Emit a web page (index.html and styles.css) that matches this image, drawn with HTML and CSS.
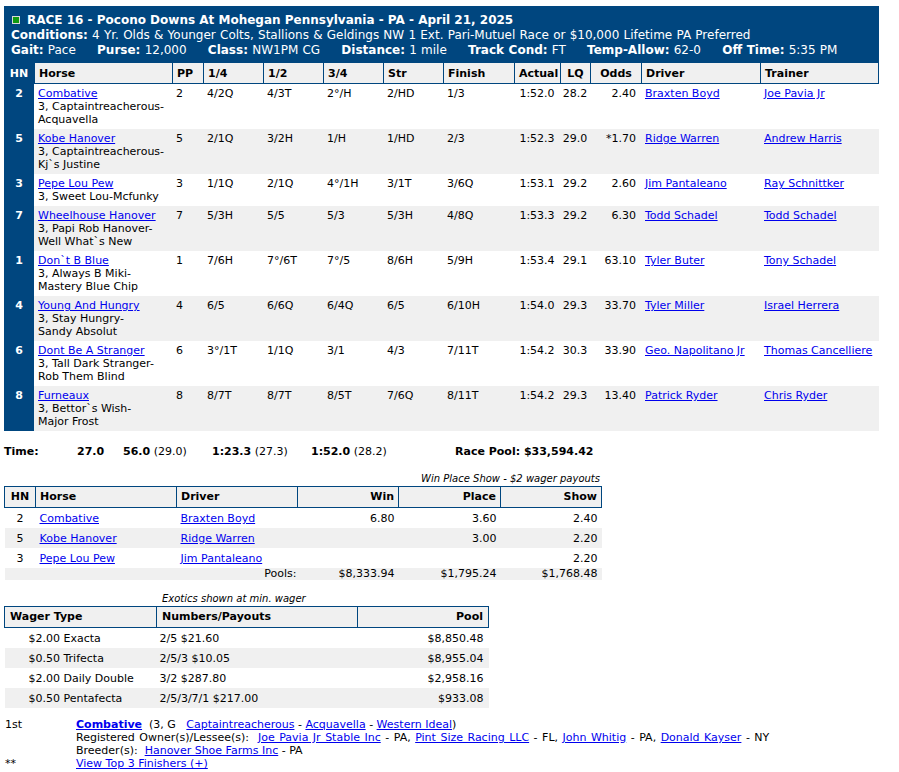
FILE: index.html
```html
<!DOCTYPE html>
<html>
<head>
<meta charset="utf-8">
<title>Race 16 - Pocono Downs</title>
<link rel="stylesheet" href="styles.css">
</head>
<body>
<div class="page">
  <div class="race-head">
    <div class="title"><span class="sq"></span>RACE 16 - Pocono Downs At Mohegan Pennsylvania - PA - April 21, 2025</div>
    <div class="line"><b>Conditions:</b> 4 Yr. Olds &amp; Younger Colts, Stallions &amp; Geldings NW 1 Ext. Pari-Mutuel Race or $10,000 Lifetime PA Preferred</div>
    <div class="line meta">
      <span><b>Gait:</b> Pace</span>
      <span><b>Purse:</b> 12,000</span>
      <span><b>Class:</b> NW1PM CG</span>
      <span><b>Distance:</b> 1 mile</span>
      <span><b>Track Cond:</b> FT</span>
      <span><b>Temp-Allow:</b> 62-0</span>
      <span><b>Off Time:</b> 5:35 PM</span>
    </div>
  </div>

  <table class="results">
    <thead>
      <tr>
        <th class="c-hn">HN</th>
        <th class="c-horse">Horse</th>
        <th class="c-pp">PP</th>
        <th class="c-call">1/4</th>
        <th class="c-call">1/2</th>
        <th class="c-call">3/4</th>
        <th class="c-call">Str</th>
        <th class="c-fin">Finish</th>
        <th class="c-act ctr">Actual</th>
        <th class="c-lq ctr">LQ</th>
        <th class="c-odds ctr">Odds</th>
        <th class="c-drv">Driver</th>
        <th class="c-trn">Trainer</th>
      </tr>
    </thead>
    <tbody>
      <tr>
        <td class="hn">2</td>
        <td><a href="#">Combative</a><br>3, Captaintreacherous-<br>Acquavella</td>
        <td>2</td><td>4/2Q</td><td>4/3T</td><td>2°/H</td><td>2/HD</td><td>1/3</td>
        <td class="ctr">1:52.0</td><td class="ctr">28.2</td><td class="rt">2.40</td>
        <td><a href="#">Braxten Boyd</a></td><td><a href="#">Joe Pavia Jr</a></td>
      </tr>
      <tr>
        <td class="hn">5</td>
        <td><a href="#">Kobe Hanover</a><br>3, Captaintreacherous-<br>Kj`s Justine</td>
        <td>5</td><td>2/1Q</td><td>3/2H</td><td>1/H</td><td>1/HD</td><td>2/3</td>
        <td class="ctr">1:52.3</td><td class="ctr">29.0</td><td class="rt">*1.70</td>
        <td><a href="#">Ridge Warren</a></td><td><a href="#">Andrew Harris</a></td>
      </tr>
      <tr>
        <td class="hn">3</td>
        <td><a href="#">Pepe Lou Pew</a><br>3, Sweet Lou-Mcfunky</td>
        <td>3</td><td>1/1Q</td><td>2/1Q</td><td>4°/1H</td><td>3/1T</td><td>3/6Q</td>
        <td class="ctr">1:53.1</td><td class="ctr">29.2</td><td class="rt">2.60</td>
        <td><a href="#">Jim Pantaleano</a></td><td><a href="#">Ray Schnittker</a></td>
      </tr>
      <tr>
        <td class="hn">7</td>
        <td><a href="#">Wheelhouse Hanover</a><br>3, Papi Rob Hanover-<br>Well What`s New</td>
        <td>7</td><td>5/3H</td><td>5/5</td><td>5/3</td><td>5/3H</td><td>4/8Q</td>
        <td class="ctr">1:53.3</td><td class="ctr">29.2</td><td class="rt">6.30</td>
        <td><a href="#">Todd Schadel</a></td><td><a href="#">Todd Schadel</a></td>
      </tr>
      <tr>
        <td class="hn">1</td>
        <td><a href="#">Don`t B Blue</a><br>3, Always B Miki-<br>Mastery Blue Chip</td>
        <td>1</td><td>7/6H</td><td>7°/6T</td><td>7°/5</td><td>8/6H</td><td>5/9H</td>
        <td class="ctr">1:53.4</td><td class="ctr">29.1</td><td class="rt">63.10</td>
        <td><a href="#">Tyler Buter</a></td><td><a href="#">Tony Schadel</a></td>
      </tr>
      <tr>
        <td class="hn">4</td>
        <td><a href="#">Young And Hungry</a><br>3, Stay Hungry-<br>Sandy Absolut</td>
        <td>4</td><td>6/5</td><td>6/6Q</td><td>6/4Q</td><td>6/5</td><td>6/10H</td>
        <td class="ctr">1:54.0</td><td class="ctr">29.3</td><td class="rt">33.70</td>
        <td><a href="#">Tyler Miller</a></td><td><a href="#">Israel Herrera</a></td>
      </tr>
      <tr>
        <td class="hn">6</td>
        <td><a href="#">Dont Be A Stranger</a><br>3, Tall Dark Stranger-<br>Rob Them Blind</td>
        <td>6</td><td>3°/1T</td><td>1/1Q</td><td>3/1</td><td>4/3</td><td>7/11T</td>
        <td class="ctr">1:54.2</td><td class="ctr">30.3</td><td class="rt">33.90</td>
        <td><a href="#">Geo. Napolitano Jr</a></td><td><a href="#">Thomas Cancelliere</a></td>
      </tr>
      <tr>
        <td class="hn">8</td>
        <td><a href="#">Furneaux</a><br>3, Bettor`s Wish-<br>Major Frost</td>
        <td>8</td><td>8/7T</td><td>8/7T</td><td>8/5T</td><td>7/6Q</td><td>8/11T</td>
        <td class="ctr">1:54.2</td><td class="ctr">29.3</td><td class="rt">13.40</td>
        <td><a href="#">Patrick Ryder</a></td><td><a href="#">Chris Ryder</a></td>
      </tr>
    </tbody>
  </table>

  <div class="time-row">
    <b>Time:</b>
    <span><b>27.0</b></span>
    <span><b>56.0</b> (29.0)</span>
    <span><b>1:23.3</b> (27.3)</span>
    <span><b>1:52.0</b> (28.2)</span>
    <b>Race Pool: $33,594.42</b>
  </div>

  <div class="cap wps-cap">Win Place Show - $2 wager payouts</div>
  <table class="wps">
    <thead>
      <tr>
        <th class="w-hn ctr">HN</th>
        <th class="w-horse">Horse</th>
        <th class="w-drv">Driver</th>
        <th class="w-pay rt">Win</th>
        <th class="w-pay2 rt">Place</th>
        <th class="w-pay rt">Show</th>
      </tr>
    </thead>
    <tbody>
      <tr>
        <td class="ctr">2</td><td><a href="#">Combative</a></td><td><a href="#">Braxten Boyd</a></td>
        <td class="rt">6.80</td><td class="rt">3.60</td><td class="rt">2.40</td>
      </tr>
      <tr>
        <td class="ctr">5</td><td><a href="#">Kobe Hanover</a></td><td><a href="#">Ridge Warren</a></td>
        <td class="rt"></td><td class="rt">3.00</td><td class="rt">2.20</td>
      </tr>
      <tr>
        <td class="ctr">3</td><td><a href="#">Pepe Lou Pew</a></td><td><a href="#">Jim Pantaleano</a></td>
        <td class="rt"></td><td class="rt"></td><td class="rt">2.20</td>
      </tr>
      <tr class="pools">
        <td colspan="3" class="rt pools-label">Pools:</td>
        <td class="rt">$8,333.94</td><td class="rt">$1,795.24</td><td class="rt">$1,768.48</td>
      </tr>
    </tbody>
  </table>

  <div class="cap ex-cap">Exotics shown at min. wager</div>
  <table class="exotics">
    <thead>
      <tr>
        <th class="e-type">Wager Type</th>
        <th class="e-num">Numbers/Payouts</th>
        <th class="e-pool rt">Pool</th>
      </tr>
    </thead>
    <tbody>
      <tr><td class="wt">$2.00 Exacta</td><td>2/5 $21.60</td><td class="rt">$8,850.48</td></tr>
      <tr><td class="wt">$0.50 Trifecta</td><td>2/5/3 $10.05</td><td class="rt">$8,955.04</td></tr>
      <tr><td class="wt">$2.00 Daily Double</td><td>3/2 $287.80</td><td class="rt">$2,958.16</td></tr>
      <tr><td class="wt">$0.50 Pentafecta</td><td>2/5/3/7/1 $217.00</td><td class="rt">$933.08</td></tr>
    </tbody>
  </table>

  <div class="winner">
    <div class="w-label">1st</div>
    <div class="w-body">
      <div><a href="#" class="strong">Combative</a>&nbsp; (3, G&nbsp;&nbsp; <a href="#">Captaintreacherous</a> - <a href="#">Acquavella</a> - <a href="#">Western Ideal</a>)</div>
      <div class="owners">Registered Owner(s)/Lessee(s):&nbsp; <a href="#">Joe Pavia Jr Stable Inc</a> - PA, <a href="#">Pint Size Racing LLC</a> - FL, <a href="#">John Whitig</a> - PA, <a href="#">Donald Kayser</a> - NY</div>
      <div>Breeder(s):&nbsp; <a href="#">Hanover Shoe Farms Inc</a> - PA</div>
    </div>
    <div class="w-label">**</div>
    <div class="w-body"><a href="#">View Top 3 Finishers (+)</a></div>
  </div>
</div>
</body>
</html>
```

FILE: styles.css
```css
html, body {
  margin: 0;
  padding: 0;
  background: #ffffff;
}

body {
  font-family: "DejaVu Sans", Verdana, sans-serif;
  font-size: 11px;
  color: #000000;
}

a {
  color: #0000ee;
  text-decoration: underline;
}

.page {
  padding: 6px 0 0 4px;
}

.ctr { text-align: center; }
.rt { text-align: right; }

/* ---------- race header ---------- */
.race-head {
  width: 875px;
  box-sizing: border-box;
  background: #00467f;
  color: #ffffff;
  padding: 7px 6px 5px 7px;
  font-size: 12px;
  line-height: 15px;
}

.title {
  font-weight: bold;
  white-space: nowrap;
}

.sq {
  display: inline-block;
  width: 6px;
  height: 6px;
  background: #109a10;
  border: 1px solid #d8d8d8;
  margin-left: 1px;
  margin-right: 7px;
  vertical-align: 0px;
}

.line {
  white-space: nowrap;
  word-spacing: 0.4px;
}

.meta span {
  margin-right: 17px;
}

/* ---------- results table ---------- */
.results {
  width: 875px;
  table-layout: fixed;
  border-collapse: separate;
  border-spacing: 0;
}

.results th,
.results td {
  box-sizing: border-box;
}

.results th {
  background: #f0f0f0;
  font-weight: bold;
  text-align: left;
  padding: 4px 4px 2px;
  line-height: 14px;
  border-left: 1px solid #00467f;
  border-bottom: 1px solid #00467f;
  white-space: nowrap;
}

.results th.ctr { text-align: center; }

.results th.c-hn {
  background: #00467f;
  color: #ffffff;
  border-left: none;
  text-align: center;
}

.results th.c-trn { border-right: 1px solid #00467f; }

.c-hn { width: 30px; }
.c-horse { width: 138px; }
.c-pp { width: 31px; }
.c-call { width: 60px; }
.c-fin { width: 71px; }
.c-act { width: 46px; }
.c-lq { width: 30px; }
.c-odds { width: 51px; }
.c-drv { width: 119px; }
.c-trn { width: 119px; }

.results td {
  padding: 3px 4px;
  line-height: 13px;
  vertical-align: top;
  white-space: nowrap;
}

.results td.ctr { padding-left: 1px; padding-right: 1px; }
.results td.rt { padding-right: 5px; }

.results td.hn {
  background: #00467f;
  color: #ffffff;
  font-weight: bold;
  text-align: center;
}

.results tbody tr:nth-child(even) td:not(.hn) {
  background: #f0f0f0;
}

/* ---------- time row ---------- */
.time-row {
  display: grid;
  grid-template-columns: 73px 46px 89px 99px 144px auto;
  margin-top: 14px;
  line-height: 14px;
  width: 875px;
}

/* ---------- captions ---------- */
.cap {
  font-size: 10px;
  font-style: italic;
  line-height: 12px;
}

.wps-cap {
  margin-top: 14px;
  width: 596px;
  text-align: right;
  margin-bottom: 1px;
}

.ex-cap {
  margin-top: 13px;
  padding-left: 158px;
  margin-bottom: 1px;
}

/* ---------- WPS / exotics tables ---------- */
.wps,
.exotics {
  table-layout: fixed;
  border-collapse: collapse;
  border-spacing: 0;
}

.wps { width: 597px; }
.exotics { width: 484px; }

.wps th,
.exotics th {
  background: #f0f0f0;
  border: 1px solid #00467f;
  font-weight: bold;
  text-align: left;
  padding: 3px 4px;
  line-height: 14px;
  box-sizing: border-box;
}

.wps th.rt,
.exotics th.rt { text-align: right; }
.wps th.ctr { text-align: center; }

.w-hn { width: 31px; }
.w-horse { width: 141px; }
.w-drv { width: 121px; }
.w-pay { width: 101px; }
.w-pay2 { width: 102px; }

.wps td,
.exotics td {
  padding: 4px 4px 3px;
  line-height: 13px;
  white-space: nowrap;
}

.wps tbody tr:nth-child(even) td,
.exotics tbody tr:nth-child(even) td {
  background: #f0f0f0;
}

.wps tr.pools td {
  padding-top: 0;
  padding-bottom: 0;
  line-height: 12px;
}

.wps td.pools-label { padding-right: 1px; }

.e-type { width: 152px; }
.e-num { width: 201px; }
.e-pool { width: 131px; }

.exotics th { padding-left: 5px; padding-right: 5px; }
.exotics td { padding-left: 3px; padding-right: 5px; }
.exotics td.wt { padding-left: 24px; }

/* ---------- winner info ---------- */
.winner {
  display: grid;
  grid-template-columns: 71px auto;
  margin-top: 10px;
  line-height: 13px;
  padding-left: 1px;
}

.w-body { white-space: nowrap; }

.owners { word-spacing: 1px; }

.strong { font-weight: bold; }
```
